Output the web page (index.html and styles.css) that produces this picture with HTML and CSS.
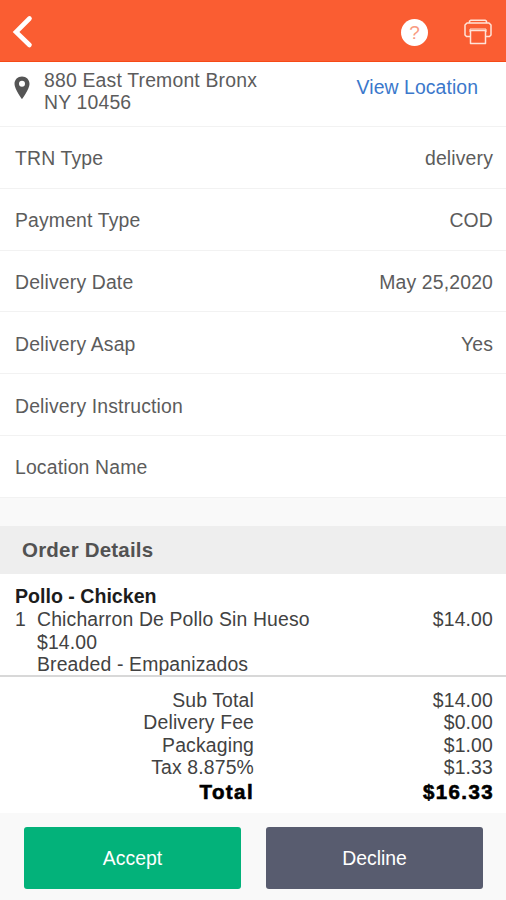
FILE: index.html
```html
<!DOCTYPE html>
<html lang="en">
<head>
<meta charset="utf-8">
<title>Order</title>
<link rel="stylesheet" href="styles.css">
</head>
<body>
<header class="topbar">
  <svg class="back" width="22" height="34" viewBox="0 0 22 34" fill="none" stroke="#fff" stroke-width="4.6" stroke-linecap="round" stroke-linejoin="miter"><path d="M18.500 3.500 5 17 18.500 30"/></svg>
  <div class="actions">
    <span class="help">?</span>
    <svg width="30" height="28" viewBox="0 0 30 28" fill="none" stroke="#ffe3d8" stroke-width="1.5" stroke-linejoin="round"><path d="M6.500 5V3.200L8 2.200h14l1.500 1V5"/><path d="M7 18.500H3.500L2 17V7L4 5H26L28 7V17L26.500 18.500H23"/><path d="M7.500 12.500h15v13h-15z"/><path d="M7 14V11h16V14" stroke-width="1"/></svg>
  </div>
</header>
<section class="address">
  <svg class="pin" width="16" height="24" viewBox="0 0 16 24"><path fill="#555" fill-rule="evenodd" d="M8 .5C3.700.5.500 3.700.500 7.900.500 13 8 23 8 23s7.500-10 7.500-15.100C15.500 3.700 12.300.500 8 .500zm0 4.300a3 3 0 1 1 0 6 3 3 0 0 1 0-6z"/></svg>
  <div class="street">880 East Tremont Bronx<br>NY 10456</div>
  <div class="view">View Location</div>
</section>
<section class="info">
  <div class="row"><span>TRN Type</span><span class="value">delivery</span></div>
  <div class="row"><span>Payment Type</span><span class="value">COD</span></div>
  <div class="row"><span>Delivery Date</span><span class="value">May 25,2020</span></div>
  <div class="row"><span>Delivery Asap</span><span class="value">Yes</span></div>
  <div class="row"><span>Delivery Instruction</span></div>
  <div class="row"><span>Location Name</span></div>
</section>
<h2 class="heading">Order Details</h2>
<section class="items">
  <h3 class="category">Pollo - Chicken</h3>
  <div class="item">
    <span class="qty">1</span>
    <div class="name">Chicharron De Pollo Sin Hueso<br>$14.00<br>Breaded - Empanizados</div>
    <span class="value">$14.00</span>
  </div>
</section>
<section class="totals">
  <div class="line"><span class="label">Sub Total</span><span class="value">$14.00</span></div>
  <div class="line"><span class="label">Delivery Fee</span><span class="value">$0.00</span></div>
  <div class="line"><span class="label">Packaging</span><span class="value">$1.00</span></div>
  <div class="line"><span class="label">Tax 8.875%</span><span class="value">$1.33</span></div>
  <div class="line total"><span class="label">Total</span><span class="value">$16.33</span></div>
</section>
<footer class="buttons">
  <div class="btn accept">Accept</div>
  <div class="btn decline">Decline</div>
</footer>
</body>
</html>
```
FILE: styles.css
```css
* { box-sizing: border-box; }
body {
  margin: 0;
  height: 900px;
  overflow: hidden;
  background: #f9f9f9;
  color: #5c5c5c;
  font: 19.400px/22.500px "Liberation Sans", Arial, sans-serif;
  letter-spacing: .15px;
  display: flex;
  flex-direction: column;
}
h2, h3 { margin: 0; }
.topbar {
  height: 62px;
  background: #fa5d32;
  border-bottom: 1px solid #f64a17;
  display: flex;
  align-items: center;
  justify-content: space-between;
  padding: 3px 13px 0 11px;
}
.actions { display: flex; align-items: center; gap: 35px; }
.help {
  width: 27px;
  height: 27px;
  border-radius: 50%;
  background: #fff;
  color: #f99b82;
  font-size: 19px;
  line-height: 27px;
  letter-spacing: 0;
  text-align: center;
}
.address {
  height: 65px;
  background: #fff;
  border-bottom: 1px solid #f2f2f2;
  display: flex;
  align-items: flex-start;
  padding: 6.500px 28px 0 14px;
}
.pin { margin-top: 7.500px; }
.street { margin-left: 14px; flex: 1; letter-spacing: .18px; }
.view { color: #3b78cb; margin-top: 7px; letter-spacing: .08px; }
.row {
  height: 61.800px;
  background: #fff;
  border-bottom: 1px solid #f2f2f2;
  display: flex;
  align-items: center;
  justify-content: space-between;
  padding: 2.500px 13px 0 15px;
}
.heading {
  margin-top: 28.200px;
  height: 48px;
  padding-left: 22px;
  background: #eee;
  color: #525252;
  font-size: 20.500px;
  line-height: 48px;
  letter-spacing: .2px;
}
.items {
  height: 103px;
  background: #fff;
  border-bottom: 2px solid #d8d8d8;
  color: #424242;
  padding: 11px 13px 0 15px;
}
.category { color: #1c1c1c; font-size: 19.600px; line-height: 23.500px; letter-spacing: 0; }
.item { display: flex; }
.qty { width: 22px; }
.name { flex: 1; }
.totals {
  height: 136px;
  background: #fff;
  color: #424242;
  padding: 12px 13px 0 0;
}
.line { display: flex; justify-content: space-between; }
.label { width: 254px; text-align: right; }
.total { color: #000; font-weight: bold; font-size: 20.500px; line-height: 26px; }
.total span { letter-spacing: 1.400px; -webkit-text-stroke: .6px #000; }
.total .value { margin-right: -1px; }
.buttons { display: flex; gap: 25px; padding: 14px 23px 0 24px; }
.btn {
  flex: 1;
  height: 62px;
  border-radius: 3px;
  color: #fff;
  line-height: 63px;
  letter-spacing: 0;
  text-align: center;
}
.accept { background: #03b27a; }
.decline { background: #585c6f; }
```
